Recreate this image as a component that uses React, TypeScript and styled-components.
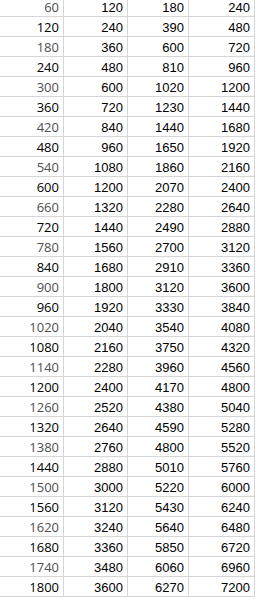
import * as React from 'react';
import styled, { createGlobalStyle } from 'styled-components';

const GlobalStyle = createGlobalStyle`
	html, body {
		margin: 0;
		padding: 0;
		background: #ffffff;
	}
`;

const Sheet = styled.div`
	width: 256px;
	height: 599px;
	overflow: hidden;
	background: #ffffff;
`;

const Grid = styled.div`
	display: grid;
	grid-template-columns: 64px 64px 61px 66px;
`;

// the top row is scrolled partly out of view, so it is shorter
const Cell = styled.div<{ $first?: boolean; $muted?: boolean; $top?: boolean }>`
	height: ${(p) => (p.$top ? '17px' : '20px')};
	box-sizing: border-box;
	padding: ${(p) => (p.$top ? '0' : p.$first ? '2px' : '3px')} 4px 0 0;
	line-height: ${(p) => (p.$top && p.$first ? '14px' : '16px')};
	text-align: right;
	border-right: 1px solid #d6d6d6;
	border-bottom: 1px solid #d6d6d6;
	font-family: ${(p) => (p.$first ? '"Open Sans", "Liberation Sans", sans-serif' : '"Liberation Sans", Arial, sans-serif')};
	font-size: 13px;
	color: ${(p) => (p.$muted ? '#4f4f4f' : '#000000')};
	white-space: nowrap;
`;

const rows = Array.from({ length: 30 }, (_, i) => {
	const n = i + 1;
	return [60 * n, 120 * n, 180 + 210 * i, 240 * n];
});

const App = () => (
	<Sheet>
		<GlobalStyle />
		<Grid>
			{rows.map((row, i) =>
				row.map((value, c) => (
					<Cell
						key={`${i}-${c}`}
						$top={i === 0}
						$first={c === 0}
						$muted={c === 0 && i % 2 === 0}
					>
						{value}
					</Cell>
				))
			)}
		</Grid>
	</Sheet>
);

export default App;
